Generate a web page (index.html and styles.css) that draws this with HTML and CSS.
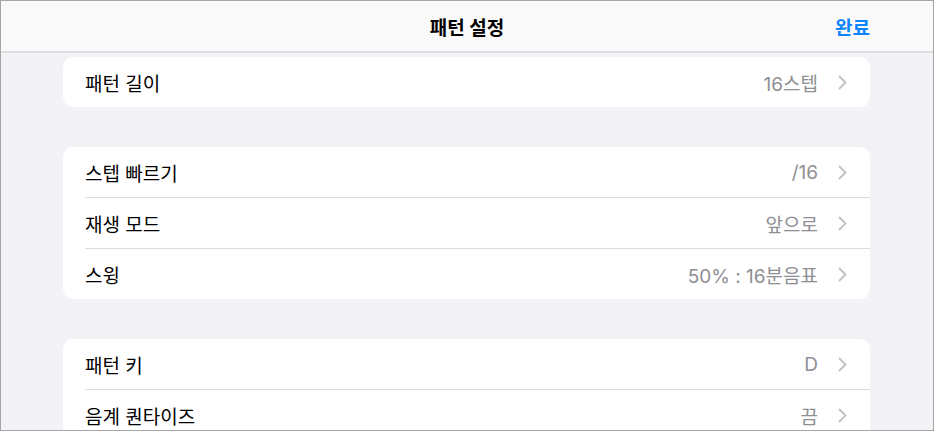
FILE: index.html
```html
<!DOCTYPE html>
<html lang="ko">
<head>
<meta charset="utf-8">
<title>패턴 설정</title>
<link rel="stylesheet" href="styles.css">
</head>
<body>
<div class="window">
  <header class="navbar">
    <div class="nav-title">패턴 설정</div>
    <div class="nav-done">완료</div>
  </header>
  <main class="content">
    <section class="group">
      <div class="row"><span class="label">패턴 길이</span><span class="value">16스텝</span><svg class="chev" viewBox="0 0 9 15" width="9" height="15"><polyline points="1.5,1.5 7.5,7.5 1.5,13.5"/></svg></div>
    </section>
    <section class="group">
      <div class="row"><span class="label">스텝 빠르기</span><span class="value">/16</span><svg class="chev" viewBox="0 0 9 15" width="9" height="15"><polyline points="1.5,1.5 7.5,7.5 1.5,13.5"/></svg></div>
      <div class="row"><span class="label">재생 모드</span><span class="value">앞으로</span><svg class="chev" viewBox="0 0 9 15" width="9" height="15"><polyline points="1.5,1.5 7.5,7.5 1.5,13.5"/></svg></div>
      <div class="row"><span class="label">스윙</span><span class="value">50% : 16분음표</span><svg class="chev" viewBox="0 0 9 15" width="9" height="15"><polyline points="1.5,1.5 7.5,7.5 1.5,13.5"/></svg></div>
    </section>
    <section class="group">
      <div class="row"><span class="label">패턴 키</span><span class="value">D</span><svg class="chev" viewBox="0 0 9 15" width="9" height="15"><polyline points="1.5,1.5 7.5,7.5 1.5,13.5"/></svg></div>
      <div class="row"><span class="label">음계 퀀타이즈</span><span class="value">끔</span><svg class="chev" viewBox="0 0 9 15" width="9" height="15"><polyline points="1.5,1.5 7.5,7.5 1.5,13.5"/></svg></div>
    </section>
  </main>
</div>
</body>
</html>
```

FILE: styles.css
```css
html, body {
  margin: 0;
  padding: 0;
}
body {
  font-family: "Inter", "Noto Sans CJK KR", sans-serif;
  color: #000;
}
.window {
  width: 934px;
  height: 431px;
  box-sizing: border-box;
  border: 1px solid #a6a6a6;
  background: #f2f2f7;
  overflow: hidden;
  display: flex;
  flex-direction: column;
}
.navbar {
  flex: none;
  height: 50px;
  background: #f9f9f9;
  border-bottom: 2px solid #dddde0;
  display: flex;
  align-items: center;
  justify-content: center;
  position: relative;
}
.nav-title {
  font-size: 19px;
  font-weight: 700;
}
.nav-done {
  position: absolute;
  right: 63px;
  top: 0;
  height: 50px;
  display: flex;
  align-items: center;
  font-size: 19px;
  font-weight: 700;
  color: #0a84ff;
}
.content {
  padding: 4px 63px 0 62px;
  display: flex;
  flex-direction: column;
  gap: 40px;
}
.group {
  background: #fff;
  border-radius: 10px;
  overflow: hidden;
  flex: none;
}
.row {
  height: 50px;
  display: flex;
  align-items: center;
  padding: 0 23px 0 22px;
  font-size: 19px;
  position: relative;
}
.row + .row {
  border-top: 1px solid #dcdcdf;
  margin-left: 22px;
  padding-left: 0;
}
.label {
  flex: 1;
}
.value {
  color: #8e8e93;
  margin-right: 20px;
}
.chev {
  flex: none;
  fill: none;
  stroke: #c4c4c7;
  stroke-width: 2;
  stroke-linecap: round;
  stroke-linejoin: round;
}
```
